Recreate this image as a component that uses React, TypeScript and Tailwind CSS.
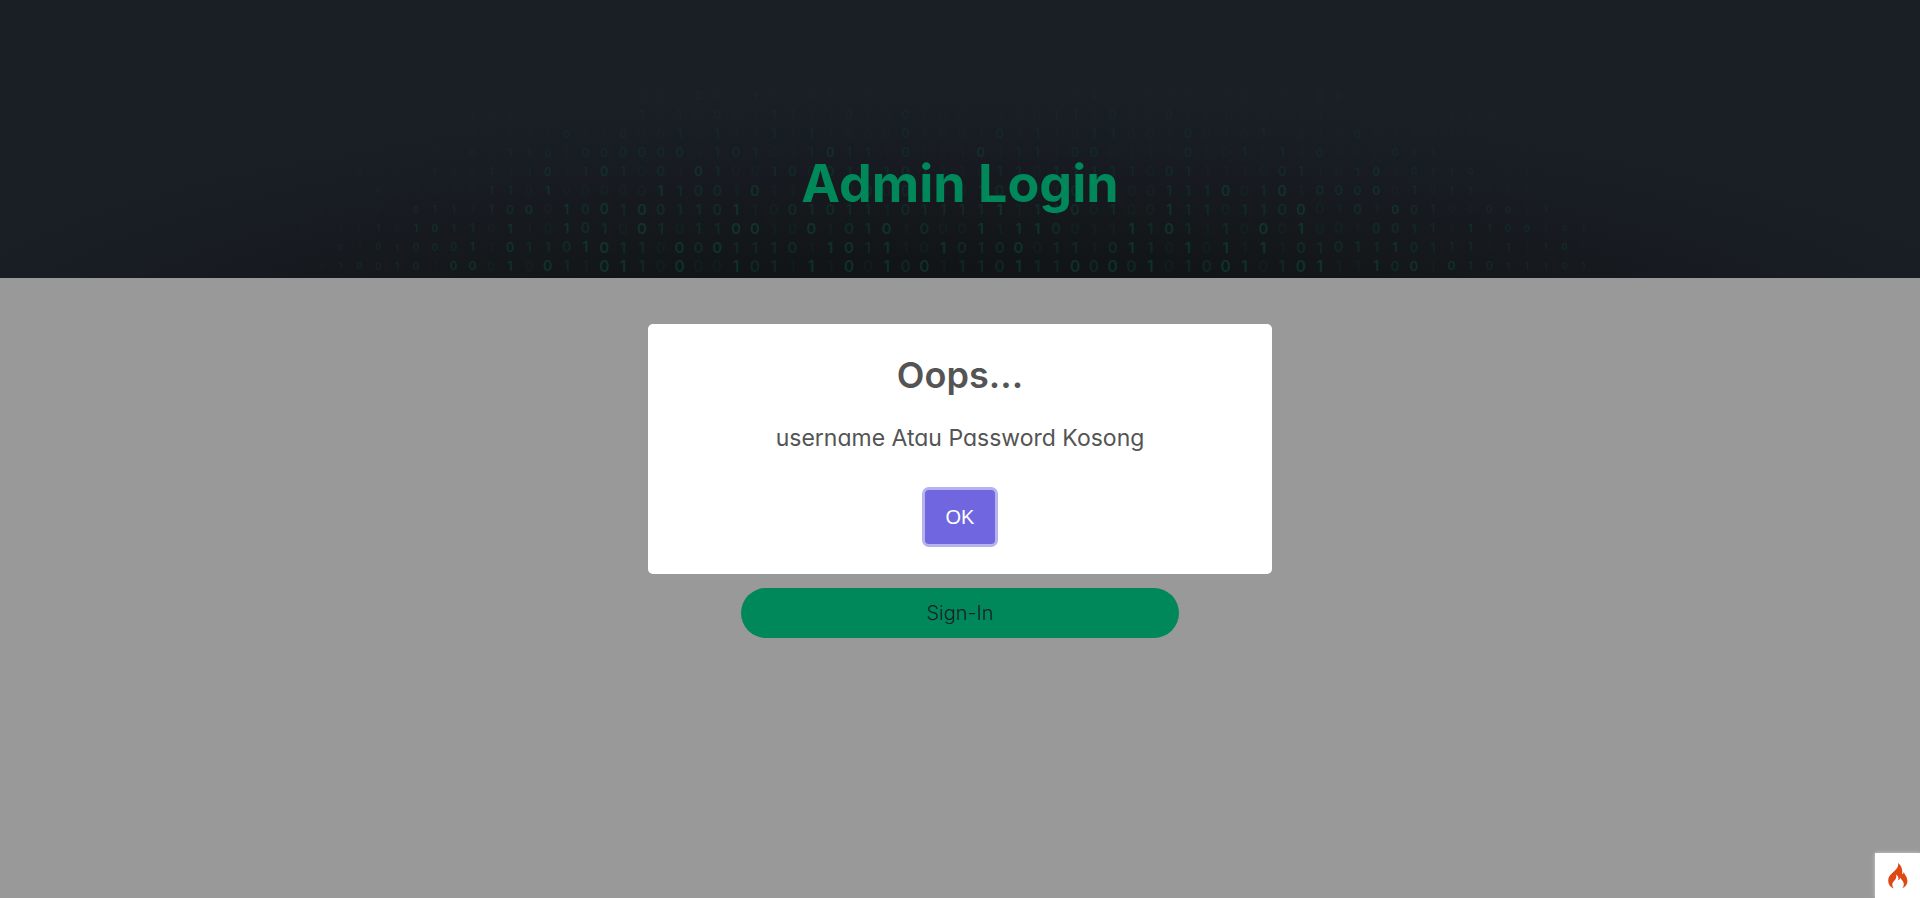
// Upper case is a bright digit, a number a medium one, lower case a faint one.
const GLYPHS: Record<string, [string, number]> = {
  O: ['0', 0.22],
  I: ['1', 0.22],
  '0': ['0', 0.14],
  '1': ['1', 0.14],
  o: ['0', 0.06],
  i: ['1', 0.06],
}

const ROWS = [
  '     o    iiiiiii' + 'oooi0oi1oooiooooi' + 'oiiooiio1iiiioiio' + ' ii00iiii         ',
  ' iiiiiiii1oooiiio' + 'i1i1o0oi11ii0io0i' + 'ooiooo11i0oo0iiio' + 'oooioioiiiiii     ',
  '  i  ii  iiiii0ii' + '0oo1o1ii1i1iooo0i' + 'ooi0i1io11ooi0oio' + '1 oio0oioiiiii    ',
  'iiiii i1i0i110i00' + '0000i101oi1O11i0i' + 'iiOi11i00oiii0io1' + 'i1i0ooo011oiiii   ',
  '  i0ioi1oo1i1Oi1O' + '1o0iO1oo10o01i101' + 'iio11o11111o01iii' + 'o01io1Oi0110ioi i ',
  ' ioi0oioio11oIooo' + 'ooI100iOiioio0o01' + 'io10iii0iioo111Oo' + '1Oi000Oo1o11ioi ii',
  'ioiioi011i10OoI0O' + '1O0110Iio01011i01' + '111Ii110o1ooI11o1' + '10Ooi0iO01oo00i1ii',
  'i 1i1oIO11oIioI01' + 'oO1o11OOioOi01Oi0' + 'ooIiII0oiiI1O1i1o' + 'OoIooi0011iI100i01',
  '  0i01000IiO110IO' + '11oO0O1110iIO1Iio' + 'I010Oo11i0I1oIoIi' + 'Ii01011I0111i1i1Oi',
  ' o10010iOOoIoO1iO' + 'I1oOooI01iIiOoI0O' + 'i110I11O0O0Io10OI' + 'o1OIiiI0OiO1011101',
]

const FIRST_X = 303
const STEP = 18.83

const BinaryBackdrop = () => (
  <svg
    aria-hidden="true"
    viewBox="0 0 1920 278"
    preserveAspectRatio="xMidYMax slice"
    className="absolute inset-0 size-full"
  >
    <defs>
      <radialGradient
        id="glow"
        cx="0"
        cy="0"
        r="1"
        gradientUnits="userSpaceOnUse"
        gradientTransform="translate(960 400) scale(1160 310)"
      >
        <stop offset="0.38" stopColor="#111316" />
        <stop offset="0.58" stopColor="#14181b" />
        <stop offset="0.75" stopColor="#171b21" />
        <stop offset="1" stopColor="#1a1f26" />
      </radialGradient>
    </defs>
    <rect width="1920" height="278" fill="url(#glow)" />
    <g fill="#00905f" fontFamily="Inter, sans-serif" fontWeight="600" textAnchor="middle">
      {ROWS.map((row, r) =>
        [...row].map((ch, k) => {
          const glyph = GLYPHS[ch]
          if (!glyph) return null
          const side = Math.min(1, ((k < 34 ? k : 70 - k) + r * 0.5) / 20)
          const size = 5 + side * (7 + r * 0.4)
          const fade = Math.min(1, 0.35 + r * 0.1) * (0.55 + 0.45 * side)
          return (
            <text
              key={`${r}-${k}`}
              x={FIRST_X + k * STEP}
              y={96 + r * 18.9 + size * 0.36}
              fontSize={size}
              opacity={glyph[1] * fade}
            >
              {glyph[0]}
            </text>
          )
        }),
      )}
    </g>
  </svg>
)

const Flame = () => (
  <svg aria-hidden="true" viewBox="0 0 20 26" className="h-[26px] w-5" fill="#dd4814">
    <path d="M10 0C10.900 3.800 8.200 6.500 4.800 9.600 1.800 12.300 0.200 14.500 0.200 17.700 0.200 21.200 2.200 24.200 5.700 25.500 3.700 23 3.900 20.600 5.600 18.600 7.500 16.500 9 14.600 8 11.700 10.400 13 11.100 15 9.900 17.200 11.400 17 12.200 16 12 14.600 13.500 17 15.800 18.400 15.800 21.300 15.800 23.100 15 24.600 13.900 25.500 17.400 24.200 19.600 21.200 19.400 17.600 19.200 13.600 16.600 11.800 15.800 9 15.500 10.200 15.100 10.900 14.100 11.300 14.900 7 13.500 2.600 10 0Z" />
  </svg>
)

export default function App() {
  return (
    <div className="relative flex min-h-screen flex-col bg-[#999999] font-['Inter','Open_Sans',sans-serif] [font-feature-settings:'cv11']">
      <header className="relative flex h-[278px] items-end justify-center bg-[#1a1f26] pb-16">
        <BinaryBackdrop />
        <h1 className="relative text-[52px] leading-[60px] font-bold text-[#00885a]">Admin Login</h1>
      </header>

      <main className="flex flex-col items-center px-4 pt-[310px]">
        <button
          type="submit"
          className="h-[50px] w-full max-w-[438px] rounded-full bg-[#00885a] text-xl font-light text-[#1a1f26]"
        >
          Sign-In
        </button>
      </main>

      <div className="fixed inset-0 flex items-center justify-center px-4">
        <div
          role="dialog"
          aria-modal="true"
          aria-labelledby="dialog-title"
          aria-describedby="dialog-message"
          className="flex w-full max-w-[624px] flex-col items-center rounded-[5px] bg-white pt-6 pb-[30px] text-[#545454]"
        >
          <h2 id="dialog-title" className="text-4xl leading-[54px] font-semibold">
            Oops...
          </h2>
          <p id="dialog-message" className="mt-5 text-[23px] leading-8">
            username Atau Password Kosong
          </p>
          <button
            type="button"
            className="mt-9 h-[54px] w-[70px] rounded-[4px] bg-[#7066e0] font-['Liberation_Sans',sans-serif] text-xl text-white ring-3 ring-[#7066e0]/50"
          >
            OK
          </button>
        </div>
      </div>

      <a
        href="#debug"
        aria-label="Debug toolbar"
        className="fixed right-0 bottom-0 flex size-[45px] items-center justify-center bg-white shadow-[0_0_4px_#cccccc]"
      >
        <Flame />
      </a>
    </div>
  )
}
